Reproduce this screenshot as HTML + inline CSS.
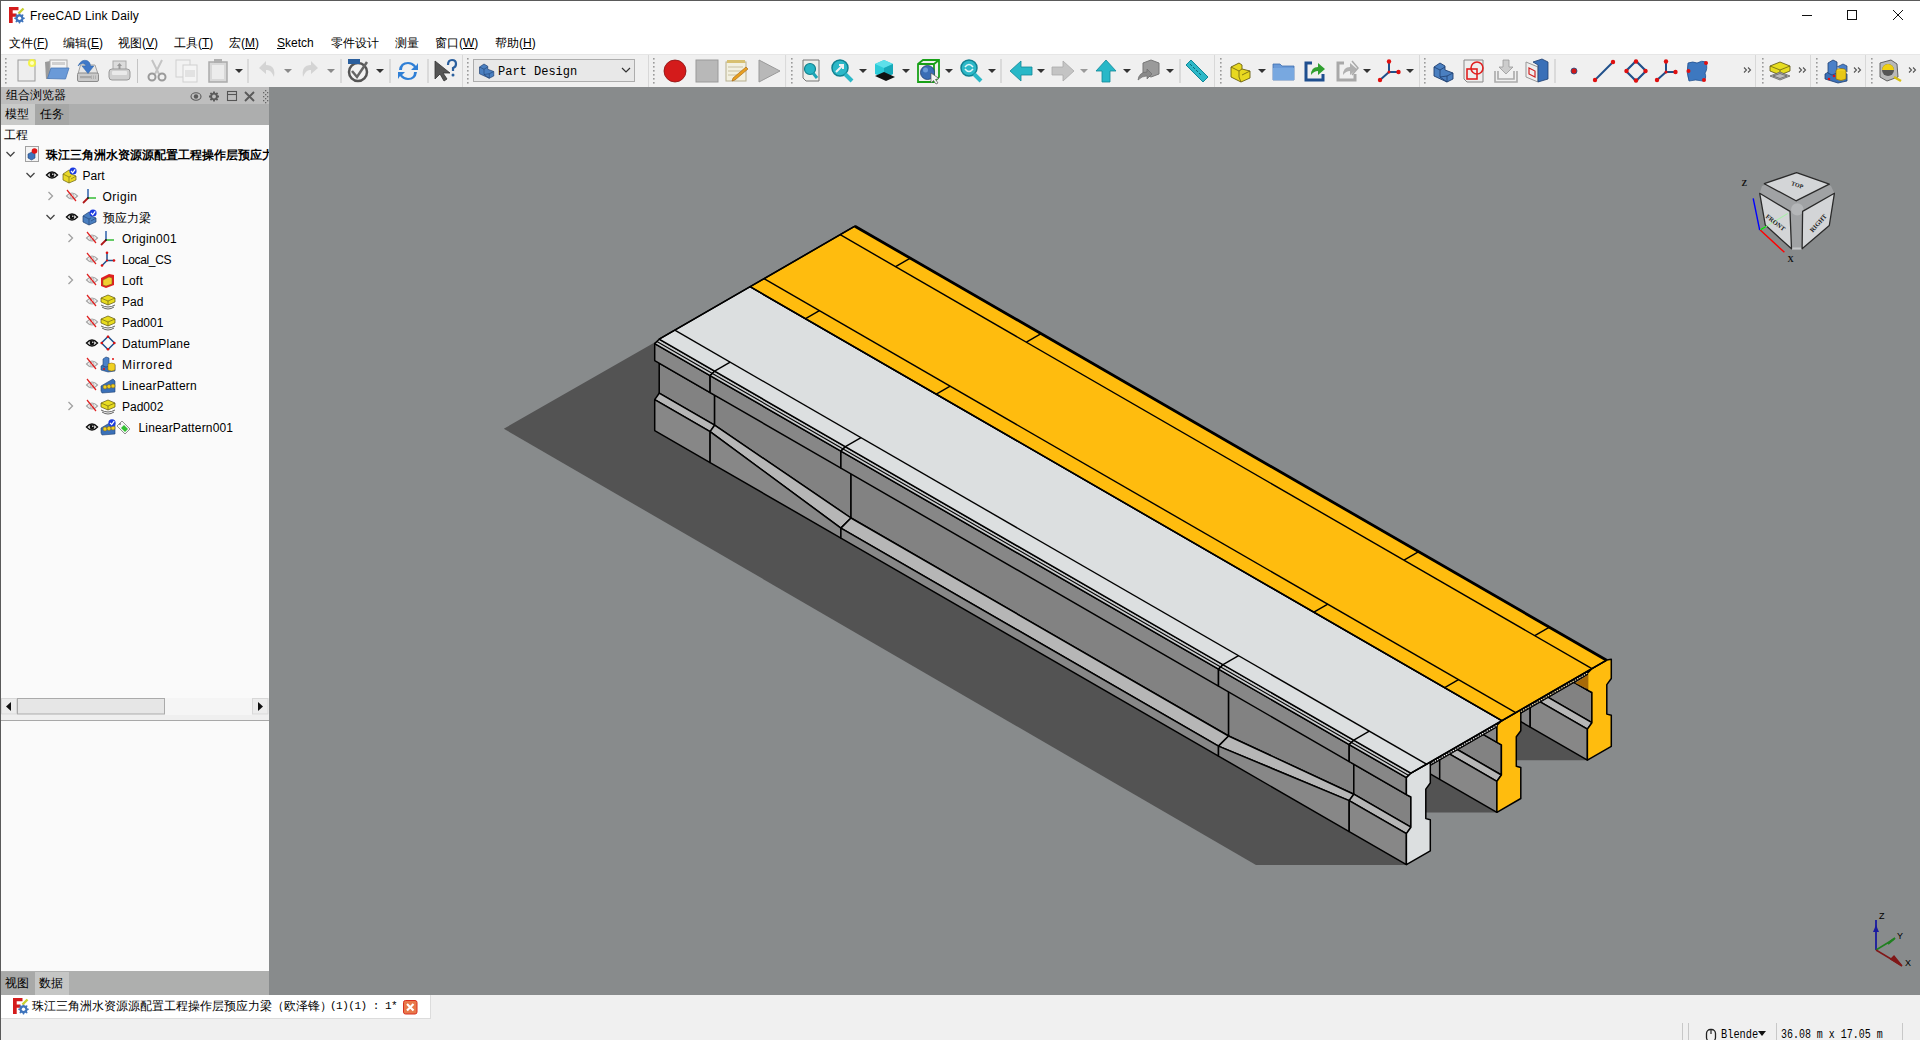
<!DOCTYPE html>
<html><head><meta charset="utf-8"><style>
*{margin:0;padding:0;box-sizing:border-box}
html,body{width:1920px;height:1040px;overflow:hidden;background:#f0f0f0;font-family:"Liberation Sans",sans-serif;font-size:12px;color:#000}
.a{position:absolute}
.m{position:absolute;top:36px;font-size:12px;line-height:15px;white-space:nowrap}
.t{position:absolute;font-size:12px;line-height:16px;white-space:nowrap}
.b{font-weight:bold}
</style></head><body>
<div class="a" style="left:0;top:0;width:1920px;height:54px;background:#fff"></div>
<div class="a" style="left:0;top:0;width:1920px;height:1px;background:#5a5a5a"></div>
<svg class="a" style="left:8px;top:6px" width="18" height="18"><path d="M1 1 L10.5 1 L10.5 4.2 L4.7 4.2 L4.7 7.5 L8.5 7.5 L8.5 10.7 L4.7 10.7 L4.7 17 L1 17Z" fill="#d41c1c"/><path d="M16.77 11.78 L16.77 12.82 L15.23 13.43 L14.94 14.14 L15.60 15.66 L14.86 16.40 L13.34 15.74 L12.63 16.03 L12.02 17.57 L10.98 17.57 L10.37 16.03 L9.66 15.74 L8.14 16.40 L7.40 15.66 L8.06 14.14 L7.77 13.43 L6.23 12.82 L6.23 11.78 L7.77 11.17 L8.06 10.46 L7.40 8.94 L8.14 8.20 L9.66 8.86 L10.37 8.57 L10.98 7.03 L12.02 7.03 L12.63 8.57 L13.34 8.86 L14.86 8.20 L15.60 8.94 L14.94 10.46 L15.23 11.17Z" fill="#3f74bc"/><circle cx="11.5" cy="12.3" r="1.7" fill="#fff"/><path d="M10.5 7.5 L15.5 2.5" stroke="#c8d030" stroke-width="2.4"/></svg>
<div class="a" style="left:30px;top:9px;font-size:12px;line-height:15px;letter-spacing:0.2px">FreeCAD Link Daily</div>
<svg class="a" style="left:1790px;top:0" width="130" height="32"><path d="M12 15.5 H22" stroke="#111" stroke-width="1"/><rect x="57.5" y="10.5" width="9" height="9" fill="none" stroke="#111" stroke-width="1"/><path d="M103 10 L113 20 M113 10 L103 20" stroke="#111" stroke-width="1"/></svg>
<div class="m" style="left:9px">文件(<u>F</u>)</div>
<div class="m" style="left:63px">编辑(<u>E</u>)</div>
<div class="m" style="left:118px">视图(<u>V</u>)</div>
<div class="m" style="left:174px">工具(<u>T</u>)</div>
<div class="m" style="left:229px">宏(<u>M</u>)</div>
<div class="m" style="left:277px"><u>S</u>ketch</div>
<div class="m" style="left:331px">零件设计</div>
<div class="m" style="left:395px">测量</div>
<div class="m" style="left:435px">窗口(<u>W</u>)</div>
<div class="m" style="left:495px">帮助(<u>H</u>)</div>
<div class="a" style="left:0;top:54px;width:1920px;height:33px;background:#f0f0f0;border-top:1px solid #e6e6e6"></div>
<svg style="position:absolute;left:0;top:0" width="1920" height="90"><rect x="5.0" y="58" width="1.6" height="1.6" fill="#9a9a9a"/><rect x="5.0" y="62" width="1.6" height="1.6" fill="#9a9a9a"/><rect x="5.0" y="66" width="1.6" height="1.6" fill="#9a9a9a"/><rect x="5.0" y="70" width="1.6" height="1.6" fill="#9a9a9a"/><rect x="5.0" y="74" width="1.6" height="1.6" fill="#9a9a9a"/><rect x="5.0" y="78" width="1.6" height="1.6" fill="#9a9a9a"/><rect x="5.0" y="82" width="1.6" height="1.6" fill="#9a9a9a"/>
<g transform="translate(17.0,59.0) scale(1.000)"><rect x="1" y="1" width="17" height="21" fill="#eeeeee" stroke="#9a9a9a"/><circle cx="15" cy="4" r="4" fill="#f4f43a" opacity="0.9"/><circle cx="15" cy="4" r="2" fill="#ffffc0"/></g>
<g transform="translate(45.0,59.0) scale(1.000)"><path d="M0 3 L5 2 L5 20 L1 20Z" fill="#9a9a9a"/><rect x="5" y="1" width="17" height="10" fill="#f4f4f4" stroke="#a8a8a8"/><rect x="7" y="3" width="13" height="3" fill="#d0d0d0"/><path d="M2.5 19.5 L6 9 L24 9 L20.5 20 Z" fill="#6a9ad8" stroke="#4a78b8" stroke-width="0.8"/></g>
<g transform="translate(77.0,59.0) scale(1.000)"><path d="M1 15 L3.5 6 L18 6 L21 15 Z" fill="#e6e6e6" stroke="#a0a0a0"/><rect x="0.5" y="14" width="21" height="8.5" rx="1.5" fill="#cacaca" stroke="#8c8c8c"/><rect x="3" y="17" width="11" height="2.2" fill="#a8a8a8"/><path d="M14.5 16.5 V20 M16.5 16.5 V20 M18.5 16.5 V20" stroke="#b0b0b0"/><path d="M1 7 Q4 0 10 1.5 Q13.5 3 13.5 7 L16.8 7 L11 14.5 L5 7 L9 7 Q8.5 4.2 5.5 4.5 Q2.5 5 1 7Z" fill="#3f78c8" stroke="#2f64a8" stroke-width="0.5"/></g>
<g transform="translate(108.0,60.0) scale(1.000)"><rect x="5" y="1" width="13" height="9" fill="#dcdcdc" stroke="#aaa"/><path d="M11.5 3 L14 6 L12.5 6 L12.5 9 L10.5 9 L10.5 6 L9 6Z" fill="#999"/><rect x="1" y="9" width="21" height="11" rx="3" fill="#d0d0d0" stroke="#999"/><rect x="4" y="11" width="15" height="4" rx="1" fill="#eaeaea"/></g>
<line x1="137.5" y1="59" x2="137.5" y2="83" stroke="#c4c4c4" stroke-width="1"/>
<g transform="translate(146.0,59.0) scale(1.000)"><path d="M6 1 L13 15 M16 1 L9 15" stroke="#c4c4c4" stroke-width="2"/><circle cx="6" cy="18" r="3.5" fill="none" stroke="#9a9a9a" stroke-width="2"/><circle cx="16" cy="18" r="3.5" fill="none" stroke="#9a9a9a" stroke-width="2"/></g>
<g transform="translate(175.0,59.0) scale(1.000)"><rect x="1" y="1" width="14" height="17" fill="#f2f2f2" stroke="#d0d0d0"/><rect x="8" y="6" width="14" height="17" fill="#f4f4f4" stroke="#d0d0d0"/><rect x="10" y="11" width="10" height="7" fill="#e2e2e2"/></g>
<g transform="translate(207.0,59.0) scale(1.000)"><rect x="2" y="3" width="18" height="20" fill="#d8d8d8" stroke="#aaa" stroke-width="1.5"/><rect x="5" y="6" width="12" height="14" fill="#ececec"/><rect x="7" y="0" width="8" height="4" fill="#b0b0b0"/></g>
<polygon points="235.0,69.0 243.0,69.0 239.0,73.0" fill="#333"/>
<line x1="248.0" y1="59" x2="248.0" y2="83" stroke="#c4c4c4" stroke-width="1"/>
<g transform="translate(256.0,59.0) scale(1.000)"><path d="M3 9 L10 2 L10 6 Q20 6 18 18 Q15 10 10 11 L10 15 Z" fill="#d4d4d4"/></g>
<polygon points="284.0,69.0 292.0,69.0 288.0,73.0" fill="#8a8a8a"/>
<g transform="translate(299.0,59.0) scale(1.000)"><path d="M19 9 L12 2 L12 6 Q2 6 4 18 Q7 10 12 11 L12 15 Z" fill="#d4d4d4"/></g>
<polygon points="327.0,69.0 335.0,69.0 331.0,73.0" fill="#8a8a8a"/>
<line x1="341.0" y1="59" x2="341.0" y2="83" stroke="#c4c4c4" stroke-width="1"/>
<g transform="translate(346.0,58.0) scale(1.000)"><circle cx="12" cy="14" r="9" fill="#f2f2f2" stroke="#555" stroke-width="2.5"/><path d="M6 13 L11 19 L21 4" fill="none" stroke="#666" stroke-width="2.5"/><rect x="2" y="1" width="12" height="5" fill="#2a5f9e"/></g>
<polygon points="376.0,69.0 384.0,69.0 380.0,73.0" fill="#333"/>
<line x1="390.0" y1="59" x2="390.0" y2="83" stroke="#c4c4c4" stroke-width="1"/>
<g transform="translate(396.0,59.0) scale(1.000)"><path d="M3 11 Q4 3 12 3 Q17 3 20 7 L22 4 L22 11 L15 11 L18 8 Q15 5 12 5 Q6 5 6 11Z" fill="#2f7fd6"/><path d="M21 13 Q20 21 12 21 Q7 21 4 17 L2 20 L2 13 L9 13 L6 16 Q9 19 12 19 Q18 19 18 13Z" fill="#2f7fd6"/></g>
<line x1="428.0" y1="59" x2="428.0" y2="83" stroke="#c4c4c4" stroke-width="1"/>
<g transform="translate(433.0,59.0) scale(1.000)"><path d="M2 2 L2 20 L7 15 L11 22 L14 20 L10 14 L17 14 Z" fill="#555" stroke="#333" stroke-width="0.8"/><path d="M15 6 Q15 1 19 1 Q23 1 23 5 Q23 8 20 9 L20 12" fill="none" stroke="#2a5f9e" stroke-width="2.2"/><circle cx="20" cy="16" r="1.5" fill="#2a5f9e"/></g>
<line x1="462.5" y1="55" x2="462.5" y2="87" stroke="#d8d8d8" stroke-width="1"/>
<rect x="467.0" y="58" width="1.6" height="1.6" fill="#9a9a9a"/><rect x="467.0" y="62" width="1.6" height="1.6" fill="#9a9a9a"/><rect x="467.0" y="66" width="1.6" height="1.6" fill="#9a9a9a"/><rect x="467.0" y="70" width="1.6" height="1.6" fill="#9a9a9a"/><rect x="467.0" y="74" width="1.6" height="1.6" fill="#9a9a9a"/><rect x="467.0" y="78" width="1.6" height="1.6" fill="#9a9a9a"/><rect x="467.0" y="82" width="1.6" height="1.6" fill="#9a9a9a"/>
<rect x="473.5" y="59.5" width="161" height="22" fill="#e8e8e8" stroke="#adadad"/>
<g transform="translate(478.0,61.0) scale(0.750)"><path d="M2 8 L8 4 L13 7 L13 11 L21 14 L21 20 L15 23 L2 17Z" fill="#4a7fc0" stroke="#1f3f70" stroke-width="0.9"/><path d="M2 8 L8 11 L13 8 M8 11 L8 18 L15 23 M15 17 L21 14 M8 18 L15 17 L15 23" stroke="#1f3f70" stroke-width="0.8" fill="none"/></g>
<text x="498" y="75" font-family="Liberation Mono" font-size="12" fill="#000">Part Design</text>
<path d="M622 68 L626 72 L630 68" fill="none" stroke="#333" stroke-width="1.2"/>
<line x1="648.5" y1="55" x2="648.5" y2="87" stroke="#d8d8d8" stroke-width="1"/>
<rect x="653.0" y="58" width="1.6" height="1.6" fill="#9a9a9a"/><rect x="653.0" y="62" width="1.6" height="1.6" fill="#9a9a9a"/><rect x="653.0" y="66" width="1.6" height="1.6" fill="#9a9a9a"/><rect x="653.0" y="70" width="1.6" height="1.6" fill="#9a9a9a"/><rect x="653.0" y="74" width="1.6" height="1.6" fill="#9a9a9a"/><rect x="653.0" y="78" width="1.6" height="1.6" fill="#9a9a9a"/><rect x="653.0" y="82" width="1.6" height="1.6" fill="#9a9a9a"/>
<g transform="translate(663.0,59.0) scale(1.000)"><circle cx="12" cy="12" r="11" fill="#d41b1b" stroke="#8a1010" stroke-width="0.8"/></g>
<g transform="translate(695.0,59.0) scale(1.000)"><rect x="1" y="1" width="22" height="22" fill="#b8b8b8" stroke="#9a9a9a"/></g>
<g transform="translate(725.0,59.0) scale(1.000)"><rect x="1" y="3" width="20" height="19" fill="#f2f0e0" stroke="#b8b090"/><path d="M3 8h15M3 12h15M3 16h12" stroke="#c8c0a0"/><path d="M8 19 L21 8 L23 10 L10 21 L7 22Z" fill="#e8a020" stroke="#a06010" stroke-width="0.6"/><rect x="2" y="1" width="18" height="3" fill="#d8c070"/></g>
<g transform="translate(757.0,59.0) scale(1.000)"><path d="M2 1 L23 12 L2 23 Z" fill="#b8b8b8" stroke="#9a9a9a"/></g>
<line x1="785.6" y1="55" x2="785.6" y2="87" stroke="#d8d8d8" stroke-width="1"/>
<rect x="791.0" y="58" width="1.6" height="1.6" fill="#9a9a9a"/><rect x="791.0" y="62" width="1.6" height="1.6" fill="#9a9a9a"/><rect x="791.0" y="66" width="1.6" height="1.6" fill="#9a9a9a"/><rect x="791.0" y="70" width="1.6" height="1.6" fill="#9a9a9a"/><rect x="791.0" y="74" width="1.6" height="1.6" fill="#9a9a9a"/><rect x="791.0" y="78" width="1.6" height="1.6" fill="#9a9a9a"/><rect x="791.0" y="82" width="1.6" height="1.6" fill="#9a9a9a"/>
<g transform="translate(802.0,59.0) scale(1.000)"><path d="M1 1 L17 1 L17 22 L4 22 L1 19 Z" fill="#eeeeea" stroke="#777"/><circle cx="8" cy="10" r="5.5" fill="#27b5c5" stroke="#13808c" stroke-width="1.2"/><path d="M11 14 L15 19" stroke="#1fa5b5" stroke-width="3"/></g>
<g transform="translate(831.0,59.0) scale(1.000)"><circle cx="9" cy="9" r="8" fill="#2cb8c8" stroke="#108090" stroke-width="1.5"/><path d="M14 15 L21 22" stroke="#2cb8c8" stroke-width="4"/><path d="M5 13 L12 6 M8 6 L12 6 L12 10" stroke="#f0f0f0" stroke-width="2" fill="none"/></g>
<polygon points="859.0,69.0 867.0,69.0 863.0,73.0" fill="#333"/>
<g transform="translate(873.0,59.0) scale(1.000)"><path d="M11 1 L20 5 L20 15 L11 19 L2 15 L2 5 Z" fill="#2ccbd8"/><path d="M2 5 L11 9 L20 5 L11 1Z" fill="#5ee0ea"/><path d="M11 9 L20 5 L20 15 L11 19Z" fill="#18a8b8"/><path d="M2 17 L11 13 L22 18 L13 22Z" fill="#111"/></g>
<polygon points="902.0,69.0 910.0,69.0 906.0,73.0" fill="#333"/>
<g transform="translate(917.0,59.0) scale(1.000)"><path d="M1 5 L6 1 L22 1 L22 18 L17 23 L1 23 Z M1 5 L17 5 L22 1 M17 5 L17 23" fill="none" stroke="#18a018" stroke-width="1.8"/><circle cx="10.5" cy="13.5" r="7" fill="#3a6db5" stroke="#1f3f70" stroke-width="0.8"/><circle cx="8.5" cy="11" r="2.5" fill="#6a9ad8"/><path d="M14 14 L14 24 L16.5 21.5 L19 25 L21 24 L18.5 20.5 L22 19.5Z" fill="#f4f4f4" stroke="#555" stroke-width="0.7"/></g>
<polygon points="945.0,69.0 953.0,69.0 949.0,73.0" fill="#333"/>
<g transform="translate(960.0,59.0) scale(1.000)"><circle cx="9" cy="9" r="8" fill="#2cb8c8" stroke="#108090" stroke-width="1.5"/><path d="M14 15 L21 22" stroke="#2cb8c8" stroke-width="4"/><path d="M5 8 Q9 3 13 8 M13 10 Q9 15 5 10" stroke="#e0f6f8" stroke-width="1.6" fill="none"/></g>
<polygon points="988.0,69.0 996.0,69.0 992.0,73.0" fill="#333"/>
<line x1="1001.0" y1="59" x2="1001.0" y2="83" stroke="#c4c4c4" stroke-width="1"/>
<g transform="translate(1009.0,59.0) scale(1.000)"><path d="M1 12 L12 2 L12 8 L23 8 L23 16 L12 16 L12 22 Z" fill="#28b8c8" stroke="#108898" stroke-width="0.8"/></g>
<polygon points="1037.0,69.0 1045.0,69.0 1041.0,73.0" fill="#333"/>
<g transform="translate(1051.0,59.0) scale(1.000)"><path d="M23 12 L12 2 L12 8 L1 8 L1 16 L12 16 L12 22 Z" fill="#c4c4c4" stroke="#aaa" stroke-width="0.8"/></g>
<polygon points="1080.0,69.0 1088.0,69.0 1084.0,73.0" fill="#9a9a9a"/>
<g transform="translate(1094.0,59.0) scale(1.000)"><path d="M12 1 L22 12 L16 12 L16 23 L8 23 L8 12 L2 12 Z" fill="#28b8c8" stroke="#108898" stroke-width="0.8"/></g>
<polygon points="1123.0,69.0 1131.0,69.0 1127.0,73.0" fill="#333"/>
<g transform="translate(1137.0,59.0) scale(1.000)"><path d="M6 4 L14 1 L22 4 L22 15 L14 18 L6 15Z" fill="#9a9a9a" stroke="#777"/><path d="M1 21 Q2 13 10 13 L10 10 L15 15 L10 20 L10 17 Q5 17 1 21Z" fill="#8a8a8a" stroke="#666" stroke-width="0.6"/></g>
<polygon points="1166.0,69.0 1174.0,69.0 1170.0,73.0" fill="#333"/>
<line x1="1180.0" y1="59" x2="1180.0" y2="83" stroke="#c4c4c4" stroke-width="1"/>
<g transform="translate(1185.0,59.0) scale(1.000)"><path d="M1 6 L6 1 L23 18 L18 23 Z" fill="#2cb8c8" stroke="#108898"/><path d="M5 5 L7 7 M8 8 L10 10 M11 11 L13 13 M14 14 L16 16" stroke="#0a6a78" stroke-width="1"/></g>
<line x1="1214.5" y1="55" x2="1214.5" y2="87" stroke="#d8d8d8" stroke-width="1"/>
<rect x="1220.0" y="58" width="1.6" height="1.6" fill="#9a9a9a"/><rect x="1220.0" y="62" width="1.6" height="1.6" fill="#9a9a9a"/><rect x="1220.0" y="66" width="1.6" height="1.6" fill="#9a9a9a"/><rect x="1220.0" y="70" width="1.6" height="1.6" fill="#9a9a9a"/><rect x="1220.0" y="74" width="1.6" height="1.6" fill="#9a9a9a"/><rect x="1220.0" y="78" width="1.6" height="1.6" fill="#9a9a9a"/><rect x="1220.0" y="82" width="1.6" height="1.6" fill="#9a9a9a"/>
<g transform="translate(1229.0,59.0) scale(1.000)"><path d="M2 8 L10 4 L13 6 L13 10 L21 12 L21 19 L12 23 L2 18Z" fill="#e8d820" stroke="#6a6010" stroke-width="0.9"/><path d="M2 8 L10 12 L13 10 M10 12 L10 18 L12 23 M13 16 L21 12" stroke="#6a6010" stroke-width="0.8" fill="none"/></g>
<polygon points="1258.0,69.0 1266.0,69.0 1262.0,73.0" fill="#333"/>
<g transform="translate(1272.0,59.0) scale(1.000)"><path d="M1 5 L8 5 L10 7 L22 7 L22 21 L1 21 Z" fill="#6a9ad8" stroke="#4070b0" stroke-width="0.8"/><rect x="1" y="9" width="21" height="12" fill="#78a8e0"/></g>
<g transform="translate(1303.0,59.0) scale(1.000)"><path d="M9 4 L3 4 L3 21 L20 21 L20 15" fill="none" stroke="#1f4f8f" stroke-width="3"/><path d="M8 16 Q8 8 15 8 L15 4 L22 10 L15 16 L15 12 Q11 12 8 16Z" fill="#30a030"/></g>
<g transform="translate(1335.0,59.0) scale(1.000)"><path d="M9 4 L3 4 L3 21 L20 21 L20 15" fill="none" stroke="#a8a8a8" stroke-width="3"/><path d="M8 16 Q8 8 15 8 L15 4 L22 10 L15 16 L15 12 Q11 12 8 16Z" fill="#b0b0b0"/><path d="M17 2 L23 9 L17 16" fill="none" stroke="#aaa" stroke-width="1.5"/></g>
<polygon points="1363.0,69.0 1371.0,69.0 1367.0,73.0" fill="#333"/>
<g transform="translate(1377.0,59.0) scale(1.000)"><path d="M12 2 L12 13 L22 13 M12 13 L3 21" stroke="#20508a" stroke-width="2" fill="none"/><circle cx="12" cy="2.5" r="2.2" fill="#e01010"/><circle cx="21.5" cy="13" r="2.2" fill="#e01010"/><circle cx="3" cy="21" r="2.2" fill="#e01010"/><circle cx="12" cy="13" r="1.5" fill="#e01010"/></g>
<polygon points="1406.0,69.0 1414.0,69.0 1410.0,73.0" fill="#333"/>
<line x1="1419.5" y1="55" x2="1419.5" y2="87" stroke="#d8d8d8" stroke-width="1"/>
<rect x="1424.0" y="58" width="1.6" height="1.6" fill="#9a9a9a"/><rect x="1424.0" y="62" width="1.6" height="1.6" fill="#9a9a9a"/><rect x="1424.0" y="66" width="1.6" height="1.6" fill="#9a9a9a"/><rect x="1424.0" y="70" width="1.6" height="1.6" fill="#9a9a9a"/><rect x="1424.0" y="74" width="1.6" height="1.6" fill="#9a9a9a"/><rect x="1424.0" y="78" width="1.6" height="1.6" fill="#9a9a9a"/><rect x="1424.0" y="82" width="1.6" height="1.6" fill="#9a9a9a"/>
<g transform="translate(1432.0,59.0) scale(1.000)"><path d="M2 8 L8 4 L13 7 L13 11 L21 14 L21 20 L15 23 L2 17Z" fill="#4a7fc0" stroke="#1f3f70" stroke-width="0.9"/><path d="M2 8 L8 11 L13 8 M8 11 L8 18 L15 23 M15 17 L21 14 M8 18 L15 17 L15 23" stroke="#1f3f70" stroke-width="0.8" fill="none"/></g>
<g transform="translate(1463.0,59.0) scale(1.000)"><path d="M1 1 L20 1 L20 23 L4 23 L1 20Z" fill="#eeeeee" stroke="#888"/><rect x="4" y="10" width="10" height="10" fill="none" stroke="#e02020" stroke-width="1.6"/><circle cx="14" cy="9" r="6" fill="none" stroke="#e02020" stroke-width="1.6"/></g>
<g transform="translate(1494.0,59.0) scale(1.000)"><path d="M9 1 L15 1 L15 8 L19 8 L12 15 L5 8 L9 8Z" fill="#cccccc" stroke="#999" stroke-width="0.8"/><path d="M1 12 L1 23 L23 23 L23 12 M4 12 L4 20 L20 20 L20 12" fill="none" stroke="#aaa" stroke-width="1.6"/></g>
<g transform="translate(1525.0,59.0) scale(1.000)"><path d="M1 3 L13 8 L13 23 L1 18Z" fill="#eeeeee" stroke="#999"/><path d="M4 9 L10 12 L10 18 L4 15Z" fill="none" stroke="#d02020" stroke-width="1.2"/><path d="M8 3 L17 0 L23 3 L23 20 L13 23 L13 6Z" fill="#3a70b8" stroke="#1f3f70" stroke-width="0.8"/></g>
<line x1="1555.0" y1="59" x2="1555.0" y2="83" stroke="#c4c4c4" stroke-width="1"/>
<g transform="translate(1562.0,59.0) scale(1.000)"><circle cx="12" cy="12" r="3" fill="#d01818" stroke="#20508a" stroke-width="0.8"/></g>
<g transform="translate(1592.0,59.0) scale(1.000)"><path d="M3 21 L21 3" stroke="#20508a" stroke-width="2"/><circle cx="3" cy="21" r="2.2" fill="#e01010"/><circle cx="21" cy="3" r="2.2" fill="#e01010"/></g>
<g transform="translate(1624.0,59.0) scale(1.000)"><path d="M12 2 L22 12 L12 22 L2 12Z" fill="none" stroke="#20508a" stroke-width="2.2"/><circle cx="12" cy="2.5" r="2.2" fill="#e01010"/><circle cx="21.5" cy="12" r="2.2" fill="#e01010"/><circle cx="12" cy="21.5" r="2.2" fill="#e01010"/><circle cx="2.5" cy="12" r="2.2" fill="#e01010"/></g>
<g transform="translate(1654.0,59.0) scale(1.000)"><path d="M12 2 L12 13 L22 13 M12 13 L3 21" stroke="#20508a" stroke-width="2" fill="none"/><circle cx="12" cy="2.5" r="2.2" fill="#e01010"/><circle cx="21.5" cy="13" r="2.2" fill="#e01010"/><circle cx="3" cy="21" r="2.2" fill="#e01010"/><circle cx="12" cy="13" r="1.5" fill="#e01010"/></g>
<g transform="translate(1685.0,59.0) scale(1.000)"><path d="M3 4 Q8 2 12 4 Q17 1 21 3 Q23 10 20 14 Q22 20 18 22 Q10 20 4 22 Q1 14 3 4Z" fill="#3d78c0" stroke="#1f4f8f" stroke-width="0.8"/><circle cx="3.5" cy="12" r="2" fill="#e01010"/><circle cx="21" cy="4" r="2" fill="#e01010"/><circle cx="19" cy="21" r="2" fill="#e01010"/></g>
<path d="M1744.0 67.5 l2.5 2.5 l-2.5 2.5 M1748.0 67.5 l2.5 2.5 l-2.5 2.5" fill="none" stroke="#555" stroke-width="1.1"/>
<path d="M1799.0 67.5 l2.5 2.5 l-2.5 2.5 M1803.0 67.5 l2.5 2.5 l-2.5 2.5" fill="none" stroke="#555" stroke-width="1.1"/>
<path d="M1854.0 67.5 l2.5 2.5 l-2.5 2.5 M1858.0 67.5 l2.5 2.5 l-2.5 2.5" fill="none" stroke="#555" stroke-width="1.1"/>
<path d="M1909.0 67.5 l2.5 2.5 l-2.5 2.5 M1913.0 67.5 l2.5 2.5 l-2.5 2.5" fill="none" stroke="#555" stroke-width="1.1"/>
<line x1="1755.5" y1="55" x2="1755.5" y2="87" stroke="#d8d8d8" stroke-width="1"/>
<rect x="1762.0" y="58" width="1.6" height="1.6" fill="#9a9a9a"/><rect x="1762.0" y="62" width="1.6" height="1.6" fill="#9a9a9a"/><rect x="1762.0" y="66" width="1.6" height="1.6" fill="#9a9a9a"/><rect x="1762.0" y="70" width="1.6" height="1.6" fill="#9a9a9a"/><rect x="1762.0" y="74" width="1.6" height="1.6" fill="#9a9a9a"/><rect x="1762.0" y="78" width="1.6" height="1.6" fill="#9a9a9a"/><rect x="1762.0" y="82" width="1.6" height="1.6" fill="#9a9a9a"/>
<g transform="translate(1768.0,59.0) scale(1.000)"><path d="M2 7 L12 3 L22 7 L22 12 L12 16 L2 12Z" fill="#e6dd20" stroke="#5a5210" stroke-width="0.8"/><path d="M2 7 L12 11 L22 7 M12 11 L12 16" stroke="#5a5210" stroke-width="0.7" fill="none"/><path d="M2 17 L12 13 L22 17 L12 21Z M5 17 L12 14.5 L19 17 L12 19.5Z" fill="#bbb" stroke="#555" stroke-width="0.7"/></g>
<line x1="1810.5" y1="55" x2="1810.5" y2="87" stroke="#d8d8d8" stroke-width="1"/>
<rect x="1816.0" y="58" width="1.6" height="1.6" fill="#9a9a9a"/><rect x="1816.0" y="62" width="1.6" height="1.6" fill="#9a9a9a"/><rect x="1816.0" y="66" width="1.6" height="1.6" fill="#9a9a9a"/><rect x="1816.0" y="70" width="1.6" height="1.6" fill="#9a9a9a"/><rect x="1816.0" y="74" width="1.6" height="1.6" fill="#9a9a9a"/><rect x="1816.0" y="78" width="1.6" height="1.6" fill="#9a9a9a"/><rect x="1816.0" y="82" width="1.6" height="1.6" fill="#9a9a9a"/>
<g transform="translate(1824.0,59.0) scale(1.000)"><path d="M1 15 L8 11 L23 15 L23 22 L14 24 L1 20Z" fill="#3a70b8" stroke="#1f3f70" stroke-width="0.8"/><path d="M4 4 L9 1 L13 3 L13 14 L8 16 L4 14Z" fill="#4a80c8" stroke="#1f3f70" stroke-width="0.8"/><path d="M13 8 L19 5 L23 7 L23 13" fill="#4a80c8" stroke="#1f3f70" stroke-width="0.7"/><ellipse cx="17" cy="12" rx="5" ry="2.5" fill="#f0d020" stroke="#806010" stroke-width="0.6"/><path d="M12 12 L12 20 Q17 23 22 20 L22 12" fill="#e8c818" stroke="#806010" stroke-width="0.6"/><circle cx="5" cy="20" r="1.3" fill="#e01010"/><circle cx="10" cy="17" r="1.3" fill="#e01010"/></g>
<line x1="1865.5" y1="55" x2="1865.5" y2="87" stroke="#d8d8d8" stroke-width="1"/>
<rect x="1871.0" y="58" width="1.6" height="1.6" fill="#9a9a9a"/><rect x="1871.0" y="62" width="1.6" height="1.6" fill="#9a9a9a"/><rect x="1871.0" y="66" width="1.6" height="1.6" fill="#9a9a9a"/><rect x="1871.0" y="70" width="1.6" height="1.6" fill="#9a9a9a"/><rect x="1871.0" y="74" width="1.6" height="1.6" fill="#9a9a9a"/><rect x="1871.0" y="78" width="1.6" height="1.6" fill="#9a9a9a"/><rect x="1871.0" y="82" width="1.6" height="1.6" fill="#9a9a9a"/>
<g transform="translate(1878.0,59.0) scale(1.000)"><path d="M2 4 L13 1 L19 5 L20 18 L9 22 L2 18Z" fill="#b8b8b8" stroke="#555" stroke-width="0.9"/><circle cx="10" cy="11" r="6" fill="#555"/><path d="M4 11 A6 6 0 0 1 16 11Z" fill="#f0d010"/><path d="M16 18 L23 22" stroke="#d8c010" stroke-width="2.5"/></g></svg>
<div class="a" style="left:269px;top:87px;width:1651px;height:908px;background:#888b8c;overflow:hidden"></div>
<svg class="a" style="left:0;top:0" width="1920" height="1040">
<polygon points="503.8,428.7 658.5,340.2 1412.0,775.0 1412.0,860.0 1406.6,865.0 1256.0,865.0" fill="#535353"/>
<polygon points="1412.0,763.4 1496.9,812.6 1412.0,812.6" fill="#535353"/>
<polygon points="1500.0,709.6 1587.4,760.3 1500.0,760.3" fill="#535353"/>
<polygon points="1409.6,580.8 1534.8,659.5 1534.8,689.7 1409.6,631.5" fill="#828282" stroke="#000" stroke-width="1.5" stroke-linejoin="round"/>
<polygon points="1534.8,659.5 1591.9,692.5 1591.9,722.7 1534.8,689.7" fill="#828282" stroke="#000" stroke-width="1.5" stroke-linejoin="round"/>
<polygon points="1409.6,631.5 1534.8,689.7 1530.2,696.1 1399.5,641.6" fill="#b6b6b6" stroke="#000" stroke-width="1.5" stroke-linejoin="round"/>
<polygon points="1534.8,689.7 1591.9,722.7 1587.4,729.1 1530.2,696.1" fill="#b6b6b6" stroke="#000" stroke-width="1.5" stroke-linejoin="round"/>
<polygon points="1399.5,641.6 1530.2,696.1 1530.2,727.1 1399.5,651.6" fill="#878787" stroke="#000" stroke-width="1.5" stroke-linejoin="round"/>
<polygon points="1530.2,696.1 1587.4,729.1 1587.4,760.1 1530.2,727.1" fill="#878787" stroke="#000" stroke-width="1.5" stroke-linejoin="round"/>
<polygon points="1399.5,564.6 1530.2,640.1 1530.2,657.1 1399.5,581.6" fill="#878787" stroke="#000" stroke-width="1.5" stroke-linejoin="round"/>
<polygon points="1530.2,640.1 1587.4,673.1 1587.4,690.1 1530.2,657.1" fill="#878787" stroke="#000" stroke-width="1.5" stroke-linejoin="round"/>
<polygon points="1404.0,560.2 1534.8,635.7 1530.2,640.1 1399.5,564.6" fill="#c8cacb" stroke="#000" stroke-width="1.5" stroke-linejoin="round"/>
<line x1="1401.7" y1="562.4" x2="1532.5" y2="637.9" stroke="#000" stroke-width="1.1"/>
<polygon points="1534.8,635.7 1591.9,668.7 1587.4,673.1 1530.2,640.1" fill="#c8cacb" stroke="#000" stroke-width="1.5" stroke-linejoin="round"/>
<line x1="1532.5" y1="637.9" x2="1589.7" y2="670.9" stroke="#000" stroke-width="1.1"/>
<polygon points="1591.9,668.7 1587.4,673.1 1587.4,690.1 1591.9,692.5 1591.9,722.7 1587.4,729.1 1587.4,760.1 1611.3,746.3 1611.3,715.3 1606.8,714.1 1606.8,684.6 1611.3,678.5 1611.3,659.3 1606.8,660.1" fill="#ffbc0e" stroke="#000" stroke-width="1.5" stroke-linejoin="round"/>
<polygon points="1319.1,633.0 1444.3,711.8 1444.3,742.0 1319.1,683.7" fill="#828282" stroke="#000" stroke-width="1.5" stroke-linejoin="round"/>
<polygon points="1444.3,711.8 1501.4,744.8 1501.4,775.0 1444.3,742.0" fill="#828282" stroke="#000" stroke-width="1.5" stroke-linejoin="round"/>
<polygon points="1319.1,683.7 1444.3,742.0 1439.7,748.3 1309.0,693.8" fill="#b6b6b6" stroke="#000" stroke-width="1.5" stroke-linejoin="round"/>
<polygon points="1444.3,742.0 1501.4,775.0 1496.9,781.3 1439.7,748.3" fill="#b6b6b6" stroke="#000" stroke-width="1.5" stroke-linejoin="round"/>
<polygon points="1309.0,693.8 1439.7,748.3 1439.7,779.3 1309.0,703.8" fill="#878787" stroke="#000" stroke-width="1.5" stroke-linejoin="round"/>
<polygon points="1439.7,748.3 1496.9,781.3 1496.9,812.3 1439.7,779.3" fill="#878787" stroke="#000" stroke-width="1.5" stroke-linejoin="round"/>
<polygon points="1309.0,616.8 1439.7,692.3 1439.7,709.3 1309.0,633.8" fill="#878787" stroke="#000" stroke-width="1.5" stroke-linejoin="round"/>
<polygon points="1439.7,692.3 1496.9,725.3 1496.9,742.3 1439.7,709.3" fill="#878787" stroke="#000" stroke-width="1.5" stroke-linejoin="round"/>
<polygon points="1313.5,612.5 1444.3,688.0 1439.7,692.3 1309.0,616.8" fill="#c8cacb" stroke="#000" stroke-width="1.5" stroke-linejoin="round"/>
<line x1="1311.2" y1="614.6" x2="1442.0" y2="690.1" stroke="#000" stroke-width="1.1"/>
<polygon points="1444.3,688.0 1501.4,721.0 1496.9,725.3 1439.7,692.3" fill="#c8cacb" stroke="#000" stroke-width="1.5" stroke-linejoin="round"/>
<line x1="1442.0" y1="690.1" x2="1499.2" y2="723.1" stroke="#000" stroke-width="1.1"/>
<polygon points="1501.4,721.0 1496.9,725.3 1496.9,742.3 1501.4,744.8 1501.4,775.0 1496.9,781.3 1496.9,812.3 1520.8,798.5 1520.8,767.5 1516.3,766.3 1516.3,736.8 1520.8,730.8 1520.8,709.8" fill="#ffbc0e" stroke="#000" stroke-width="1.5" stroke-linejoin="round"/>
<polygon points="1430.3,762.0 1496.9,723.5 1496.9,727.1 1430.3,765.6" fill="#1a1a1a" stroke="#000" stroke-width="1.0" stroke-linejoin="round"/>
<line x1="1430.3" y1="763.8" x2="1496.9" y2="725.3" stroke="#ffffff" stroke-width="1.2" stroke-dasharray="1.3 1.3"/>
<polygon points="1520.8,709.8 1587.4,671.3 1587.4,674.9 1520.8,713.4" fill="#1a1a1a" stroke="#000" stroke-width="1.0" stroke-linejoin="round"/>
<line x1="1520.8" y1="711.5" x2="1587.4" y2="673.1" stroke="#ffe8a8" stroke-width="1.2" stroke-dasharray="1.3 1.3"/>
<polygon points="1575.3,682.9 1588.0,674.7 1588.0,689.3" fill="#a86a08"/>
<polygon points="659.2,363.0 714.6,395.0 714.6,425.2 659.2,393.2" fill="#828282" stroke="#000" stroke-width="1.5" stroke-linejoin="round"/>
<polygon points="714.6,395.0 851.0,467.2 851.0,518.0 714.6,425.2" fill="#828282" stroke="#000" stroke-width="1.5" stroke-linejoin="round"/>
<polygon points="851.0,467.2 1228.6,685.2 1228.6,736.0 851.0,518.0" fill="#828282" stroke="#000" stroke-width="1.5" stroke-linejoin="round"/>
<polygon points="1228.6,685.2 1353.8,764.0 1353.8,794.2 1228.6,736.0" fill="#828282" stroke="#000" stroke-width="1.5" stroke-linejoin="round"/>
<polygon points="1353.8,764.0 1410.9,797.0 1410.9,827.2 1353.8,794.2" fill="#828282" stroke="#000" stroke-width="1.5" stroke-linejoin="round"/>
<polygon points="659.2,393.2 714.6,425.2 710.1,431.6 654.7,399.6" fill="#b6b6b6" stroke="#000" stroke-width="1.5" stroke-linejoin="round"/>
<polygon points="714.6,425.2 851.0,518.0 840.9,528.1 710.1,431.6" fill="#b6b6b6" stroke="#000" stroke-width="1.5" stroke-linejoin="round"/>
<polygon points="851.0,518.0 1228.6,736.0 1218.5,746.1 840.9,528.1" fill="#b6b6b6" stroke="#000" stroke-width="1.5" stroke-linejoin="round"/>
<polygon points="1228.6,736.0 1353.8,794.2 1349.2,800.6 1218.5,746.1" fill="#b6b6b6" stroke="#000" stroke-width="1.5" stroke-linejoin="round"/>
<polygon points="1353.8,794.2 1410.9,827.2 1406.4,833.6 1349.2,800.6" fill="#b6b6b6" stroke="#000" stroke-width="1.5" stroke-linejoin="round"/>
<polygon points="654.7,399.6 710.1,431.6 710.1,462.6 654.7,430.6" fill="#878787" stroke="#000" stroke-width="1.5" stroke-linejoin="round"/>
<polygon points="710.1,431.6 840.9,528.1 840.9,538.1 710.1,462.6" fill="#878787" stroke="#000" stroke-width="1.5" stroke-linejoin="round"/>
<polygon points="840.9,528.1 1218.5,746.1 1218.5,756.1 840.9,538.1" fill="#878787" stroke="#000" stroke-width="1.5" stroke-linejoin="round"/>
<polygon points="1218.5,746.1 1349.2,800.6 1349.2,831.6 1218.5,756.1" fill="#878787" stroke="#000" stroke-width="1.5" stroke-linejoin="round"/>
<polygon points="1349.2,800.6 1406.4,833.6 1406.4,864.6 1349.2,831.6" fill="#878787" stroke="#000" stroke-width="1.5" stroke-linejoin="round"/>
<polygon points="654.7,343.6 710.1,375.6 710.1,392.6 654.7,360.6" fill="#878787" stroke="#000" stroke-width="1.5" stroke-linejoin="round"/>
<polygon points="710.1,375.6 840.9,451.1 840.9,468.1 710.1,392.6" fill="#878787" stroke="#000" stroke-width="1.5" stroke-linejoin="round"/>
<polygon points="840.9,451.1 1218.5,669.1 1218.5,686.1 840.9,468.1" fill="#878787" stroke="#000" stroke-width="1.5" stroke-linejoin="round"/>
<polygon points="1218.5,669.1 1349.2,744.6 1349.2,761.6 1218.5,686.1" fill="#878787" stroke="#000" stroke-width="1.5" stroke-linejoin="round"/>
<polygon points="1349.2,744.6 1406.4,777.6 1406.4,794.6 1349.2,761.6" fill="#878787" stroke="#000" stroke-width="1.5" stroke-linejoin="round"/>
<polygon points="659.2,339.2 714.6,371.2 710.1,375.6 654.7,343.6" fill="#c8cacb" stroke="#000" stroke-width="1.5" stroke-linejoin="round"/>
<line x1="656.9" y1="341.4" x2="712.4" y2="373.4" stroke="#000" stroke-width="1.1"/>
<polygon points="714.6,371.2 845.4,446.7 840.9,451.1 710.1,375.6" fill="#c8cacb" stroke="#000" stroke-width="1.5" stroke-linejoin="round"/>
<line x1="712.4" y1="373.4" x2="843.1" y2="448.9" stroke="#000" stroke-width="1.1"/>
<polygon points="845.4,446.7 1223.0,664.7 1218.5,669.1 840.9,451.1" fill="#c8cacb" stroke="#000" stroke-width="1.5" stroke-linejoin="round"/>
<line x1="843.1" y1="448.9" x2="1220.7" y2="666.9" stroke="#000" stroke-width="1.1"/>
<polygon points="1223.0,664.7 1353.8,740.2 1349.2,744.6 1218.5,669.1" fill="#c8cacb" stroke="#000" stroke-width="1.5" stroke-linejoin="round"/>
<line x1="1220.7" y1="666.9" x2="1351.5" y2="742.4" stroke="#000" stroke-width="1.1"/>
<polygon points="1353.8,740.2 1410.9,773.2 1406.4,777.6 1349.2,744.6" fill="#c8cacb" stroke="#000" stroke-width="1.5" stroke-linejoin="round"/>
<line x1="1351.5" y1="742.4" x2="1408.7" y2="775.4" stroke="#000" stroke-width="1.1"/>
<polygon points="1410.9,773.2 1406.4,777.6 1406.4,794.6 1410.9,797.0 1410.9,827.2 1406.4,833.6 1406.4,864.6 1430.3,850.8 1430.3,819.8 1425.8,818.6 1425.8,789.1 1430.3,783.0 1430.3,762.0" fill="#dcdfe0" stroke="#000" stroke-width="1.5" stroke-linejoin="round"/>
<polygon points="659.2,339.2 750.1,286.7 1501.8,720.7 1410.9,773.2" fill="#dcdfe0" stroke="#000" stroke-width="1.5" stroke-linejoin="round"/>
<polygon points="750.1,286.7 854.9,226.2 1606.6,660.2 1501.8,720.7" fill="#ffbc0e" stroke="#000" stroke-width="1.5" stroke-linejoin="round"/>
<line x1="674.8" y1="330.2" x2="1426.5" y2="764.2" stroke="#000" stroke-width="1.4"/>
<line x1="750.1" y1="286.7" x2="1501.8" y2="720.7" stroke="#000" stroke-width="1.4"/>
<line x1="764.0" y1="278.7" x2="1515.7" y2="712.7" stroke="#000" stroke-width="1.4"/>
<line x1="840.2" y1="234.7" x2="1591.9" y2="668.7" stroke="#000" stroke-width="1.4"/>
<line x1="714.6" y1="371.2" x2="730.2" y2="362.2" stroke="#000" stroke-width="1.4"/>
<line x1="805.6" y1="318.7" x2="819.4" y2="310.7" stroke="#000" stroke-width="1.4"/>
<line x1="895.6" y1="266.7" x2="910.3" y2="258.2" stroke="#000" stroke-width="1.4"/>
<line x1="845.4" y1="446.7" x2="861.0" y2="437.7" stroke="#000" stroke-width="1.4"/>
<line x1="936.3" y1="394.2" x2="950.2" y2="386.2" stroke="#000" stroke-width="1.4"/>
<line x1="1026.4" y1="342.2" x2="1041.1" y2="333.7" stroke="#000" stroke-width="1.4"/>
<line x1="1223.0" y1="664.7" x2="1238.6" y2="655.7" stroke="#000" stroke-width="1.4"/>
<line x1="1313.9" y1="612.2" x2="1327.8" y2="604.2" stroke="#000" stroke-width="1.4"/>
<line x1="1404.0" y1="560.2" x2="1418.7" y2="551.7" stroke="#000" stroke-width="1.4"/>
<line x1="1353.8" y1="740.2" x2="1369.3" y2="731.2" stroke="#000" stroke-width="1.4"/>
<line x1="1444.7" y1="687.7" x2="1458.5" y2="679.7" stroke="#000" stroke-width="1.4"/>
<line x1="1534.8" y1="635.7" x2="1549.5" y2="627.2" stroke="#000" stroke-width="1.4"/>
<line x1="659.2" y1="339.2" x2="854.9" y2="226.2" stroke="#000" stroke-width="1.4"/>
<line x1="854.9" y1="226.2" x2="1606.6" y2="660.2" stroke="#000" stroke-width="2.8"/>
<line x1="1410.9" y1="773.2" x2="1606.6" y2="660.2" stroke="#000" stroke-width="1.4"/>
<polygon points="1759.7,193.3 1762.0,186.0 1796.6,172.6 1831.0,186.0 1834.4,193.3 1829.3,225.5 1802.1,249.5 1791.5,249.5 1765.3,225.0" fill="#a0a2a4"/>
<circle cx="1797.3" cy="209.4" r="6.2" fill="#b4b6b8"/>
<rect x="1792" y="247.5" width="10" height="2" fill="#c4c6c8"/>
<polygon points="1764.3,183.7 1796.6,172.6 1829.3,184.2 1796.0,200.8" fill="#d3d5d7" stroke="#2a2a2a" stroke-width="1.3" stroke-linejoin="round"/>
<polygon points="1759.7,193.3 1790.0,211.4 1791.5,248.8 1765.3,225.0" fill="#d3d5d7" stroke="#2a2a2a" stroke-width="1.3" stroke-linejoin="round"/>
<polygon points="1802.6,211.4 1834.4,193.3 1829.3,225.5 1802.1,248.8" fill="#d3d5d7" stroke="#2a2a2a" stroke-width="1.3" stroke-linejoin="round"/>
<path d="M1753.2 198.3 L1759.7 230.1" stroke="#0000ff" stroke-width="1.4"/>
<path d="M1760.2 230.1 L1784.4 252.3" stroke="#ff0000" stroke-width="1.4"/>
<path d="M1760.7 229.6 L1788 213.4" stroke="#a8f0a8" stroke-width="1.1"/>
<path d="M1760.7 229.6 L1766 226.5" stroke="#00dd00" stroke-width="1.4"/>
<text x="1741.5" y="186" font-family="Liberation Serif" font-size="8.5" font-weight="bold" fill="#111">Z</text>
<text x="1787.5" y="261.5" font-family="Liberation Serif" font-size="8.5" font-weight="bold" fill="#111">X</text>
<text x="1797" y="187" font-family="Liberation Serif" font-size="6" font-weight="bold" fill="#222" text-anchor="middle" transform="rotate(18 1797 186)">TOP</text>
<text x="1776" y="225" font-family="Liberation Serif" font-size="6.5" font-weight="bold" fill="#222" text-anchor="middle" transform="rotate(38 1776 222)">FRONT</text>
<text x="1817" y="226" font-family="Liberation Serif" font-size="6.5" font-weight="bold" fill="#222" text-anchor="middle" transform="rotate(-48 1817 222)">RIGHT</text>
<path d="M1876 920 L1876 950" stroke="#1a1aa0" stroke-width="1.8"/><path d="M1873 932 L1879 932 L1876 925Z" fill="#1a1aa0"/>
<path d="M1876 950 L1894 939" stroke="#208020" stroke-width="1.5"/><path d="M1888 944 L1895 938 L1891 941Z" fill="#208020" stroke="#208020" stroke-width="2"/>
<path d="M1876 950 L1901 965" stroke="#801818" stroke-width="1.5"/><path d="M1891 959 L1902 966 L1894 956Z" fill="#801818" stroke="#801818" stroke-width="1.5"/>
<text x="1879" y="919" font-family="Liberation Sans" font-size="9" fill="#000">Z</text>
<text x="1897" y="939" font-family="Liberation Sans" font-size="9" fill="#000">Y</text>
<text x="1905" y="966" font-family="Liberation Sans" font-size="9" fill="#000">X</text>
</svg>
<div class="a" style="left:0;top:87px;width:269px;height:17px;background:#bebebe"></div>
<div class="a" style="left:6px;top:88px;font-size:12px;line-height:15px">组合浏览器</div>
<svg class="a" style="left:180px;top:87px" width="89" height="17">
<ellipse cx="16" cy="9.5" rx="5" ry="3.7" fill="none" stroke="#5a5a5a" stroke-width="1.1"/><circle cx="16" cy="9.5" r="2.2" fill="#5a5a5a"/>
<path d="M37.77 8.50 L39.02 8.62 L39.02 10.38 L37.77 10.50 L37.37 11.46 L38.17 12.43 L36.93 13.67 L35.96 12.87 L35.00 13.27 L34.88 14.52 L33.12 14.52 L33.00 13.27 L32.04 12.87 L31.07 13.67 L29.83 12.43 L30.63 11.46 L30.23 10.50 L28.98 10.38 L28.98 8.62 L30.23 8.50 L30.63 7.54 L29.83 6.57 L31.07 5.33 L32.04 6.13 L33.00 5.73 L33.12 4.48 L34.88 4.48 L35.00 5.73 L35.96 6.13 L36.93 5.33 L38.17 6.57 L37.37 7.54Z" fill="#5a5a5a"/><circle cx="34" cy="9.5" r="1.9" fill="#bebebe"/>
<rect x="47.5" y="4.5" width="9" height="9" fill="none" stroke="#555" stroke-width="1.1"/><path d="M47.5 7.5 H56.5" stroke="#555" stroke-width="1.1"/>
<path d="M65 5 L74 14 M74 5 L65 14" stroke="#5a5a5a" stroke-width="1.9"/><rect x="85.0" y="3.0" width="1.3" height="1.3" fill="#666"/><rect x="83.0" y="5.0" width="1.3" height="1.3" fill="#666"/><rect x="87.0" y="5.0" width="1.3" height="1.3" fill="#666"/><rect x="85.0" y="7.0" width="1.3" height="1.3" fill="#666"/><rect x="83.0" y="9.0" width="1.3" height="1.3" fill="#666"/><rect x="87.0" y="9.0" width="1.3" height="1.3" fill="#666"/><rect x="85.0" y="11.0" width="1.3" height="1.3" fill="#666"/><rect x="83.0" y="13.0" width="1.3" height="1.3" fill="#666"/><rect x="87.0" y="13.0" width="1.3" height="1.3" fill="#666"/><rect x="85.0" y="15.0" width="1.3" height="1.3" fill="#666"/><rect x="83.0" y="17.0" width="1.3" height="1.3" fill="#666"/><rect x="87.0" y="17.0" width="1.3" height="1.3" fill="#666"/>
</svg>
<div class="a" style="left:0;top:104px;width:269px;height:21px;background:#adaeae"></div>
<div class="a" style="left:1px;top:104px;width:34px;height:21px;background:#c9cac9"></div>
<div class="a" style="left:35px;top:104px;width:34px;height:21px;background:#a6a7a6"></div>
<div class="a" style="left:5px;top:107px;font-size:12px;line-height:15px">模型</div>
<div class="a" style="left:40px;top:107px;font-size:12px;line-height:15px">任务</div>
<div class="a" style="left:1px;top:125px;width:268px;height:573px;background:#fafafa"></div>
<div class="a" style="left:4px;top:128px;font-size:12px;line-height:15px">工程</div>
<div style="position:absolute;left:0;top:0;width:269px;height:698px;overflow:hidden"><svg style="position:absolute;left:0;top:0" width="269" height="700"><path d="M6.5 152.0 l4 4 l4 -4" fill="none" stroke="#444" stroke-width="1.3"/>
<g transform="translate(25.0,146.0) scale(1.000)"><rect x="0.5" y="0.5" width="13" height="15" fill="#f4f4f4" stroke="#a0a0a0"/><path d="M3 8 L7 6 L10 7.5 L10 12 L6.5 14 L3 12Z" fill="#3f74bc" stroke="#1f3f70" stroke-width="0.6"/><circle cx="9.5" cy="5" r="2.8" fill="#e01515"/></g>
<path d="M26.5 173.0 l4 4 l4 -4" fill="none" stroke="#444" stroke-width="1.3"/>
<g transform="translate(46.0,170.0) scale(1.000)"><path d="M0.5 5 Q6 -1 11.5 5 Q6 11 0.5 5Z" fill="#fff" stroke="#111" stroke-width="1.4"/><circle cx="6" cy="5" r="2.4" fill="#111"/><circle cx="6.8" cy="4.3" r="0.7" fill="#fff"/></g>
<g transform="translate(62.0,167.0) scale(1.000)"><path d="M1 7 L7 3 L9 4.5 L9 7 L14 9 L14 13 L7 16 L1 13Z" fill="#e8d828" stroke="#6a6010" stroke-width="0.7"/><path d="M1 7 L7 10 L9 9 M7 10 L7 16 M9 12 L14 9" stroke="#6a6010" stroke-width="0.6" fill="none"/><circle cx="11" cy="4" r="3.6" fill="#1a3ae0"/><path d="M9 4 L10.7 5.8 L13.2 2.3" stroke="#fff" stroke-width="1.2" fill="none"/></g>
<path d="M48.5 192.0 l4 4 l-4 4" fill="none" stroke="#a0a0a0" stroke-width="1.3"/>
<g transform="translate(66.0,191.0) scale(1.000)"><path d="M0.5 5 Q6 -1 11.5 5 Q6 11 0.5 5Z" fill="none" stroke="#a8a8a8" stroke-width="1.2"/><circle cx="6" cy="5" r="2" fill="none" stroke="#b0b0b0" stroke-width="1"/><path d="M1 -1 L10 10" stroke="#e02020" stroke-width="1.2"/></g>
<g transform="translate(82.0,188.0) scale(1.000)"><path d="M6 1 L6 10" stroke="#3a6ab0" stroke-width="1.6"/><path d="M6 10 L14 10" stroke="#40c040" stroke-width="1.6"/><path d="M6 10 L1 15" stroke="#b01818" stroke-width="1.8"/><circle cx="6" cy="10" r="1" fill="#222"/></g>
<path d="M46.5 215.0 l4 4 l4 -4" fill="none" stroke="#444" stroke-width="1.3"/>
<g transform="translate(66.0,212.0) scale(1.000)"><path d="M0.5 5 Q6 -1 11.5 5 Q6 11 0.5 5Z" fill="#fff" stroke="#111" stroke-width="1.4"/><circle cx="6" cy="5" r="2.4" fill="#111"/><circle cx="6.8" cy="4.3" r="0.7" fill="#fff"/></g>
<g transform="translate(82.0,209.0) scale(1.000)"><path d="M1 7 L7 3 L9 4.5 L9 7 L14 9 L14 13 L7 16 L1 13Z" fill="#4a7fc0" stroke="#1f3f70" stroke-width="0.7"/><path d="M1 7 L7 10 L9 9 M7 10 L7 16 M9 12 L14 9" stroke="#1f3f70" stroke-width="0.6" fill="none"/><circle cx="11" cy="4" r="3.6" fill="#1a3ae0"/><path d="M9 4 L10.7 5.8 L13.2 2.3" stroke="#fff" stroke-width="1.2" fill="none"/></g>
<path d="M68.5 234.0 l4 4 l-4 4" fill="none" stroke="#a0a0a0" stroke-width="1.3"/>
<g transform="translate(86.0,233.0) scale(1.000)"><path d="M0.5 5 Q6 -1 11.5 5 Q6 11 0.5 5Z" fill="none" stroke="#a8a8a8" stroke-width="1.2"/><circle cx="6" cy="5" r="2" fill="none" stroke="#b0b0b0" stroke-width="1"/><path d="M1 -1 L10 10" stroke="#e02020" stroke-width="1.2"/></g>
<g transform="translate(100.0,230.0) scale(1.000)"><path d="M6 1 L6 10" stroke="#3a6ab0" stroke-width="1.6"/><path d="M6 10 L14 10" stroke="#40c040" stroke-width="1.6"/><path d="M6 10 L1 15" stroke="#b01818" stroke-width="1.8"/><circle cx="6" cy="10" r="1" fill="#222"/></g>
<g transform="translate(86.0,254.0) scale(1.000)"><path d="M0.5 5 Q6 -1 11.5 5 Q6 11 0.5 5Z" fill="none" stroke="#a8a8a8" stroke-width="1.2"/><circle cx="6" cy="5" r="2" fill="none" stroke="#b0b0b0" stroke-width="1"/><path d="M1 -1 L10 10" stroke="#e02020" stroke-width="1.2"/></g>
<g transform="translate(100.0,251.0) scale(1.000)"><path d="M7 1.5 L7 9.5 L14 9.5 M7 9.5 L2 14.5" stroke="#20508a" stroke-width="1.5" fill="none"/><circle cx="7" cy="1.8" r="1.3" fill="#e01010"/><circle cx="14" cy="9.5" r="1.3" fill="#e01010"/><circle cx="2" cy="14.5" r="1.3" fill="#e01010"/><circle cx="7" cy="9.5" r="1.1" fill="#e01010"/></g>
<path d="M68.5 276.0 l4 4 l-4 4" fill="none" stroke="#a0a0a0" stroke-width="1.3"/>
<g transform="translate(86.0,275.0) scale(1.000)"><path d="M0.5 5 Q6 -1 11.5 5 Q6 11 0.5 5Z" fill="none" stroke="#a8a8a8" stroke-width="1.2"/><circle cx="6" cy="5" r="2" fill="none" stroke="#b0b0b0" stroke-width="1"/><path d="M1 -1 L10 10" stroke="#e02020" stroke-width="1.2"/></g>
<g transform="translate(100.0,272.0) scale(1.000)"><path d="M1 6 L9 2 L14 3 L14 13 L6 16 L1 14Z" fill="#e02020"/><path d="M3 8 L9 5 L12 6 L12 12 L6 14 L3 13Z" fill="#f0d030" stroke="#806010" stroke-width="0.5"/></g>
<g transform="translate(86.0,296.0) scale(1.000)"><path d="M0.5 5 Q6 -1 11.5 5 Q6 11 0.5 5Z" fill="none" stroke="#a8a8a8" stroke-width="1.2"/><circle cx="6" cy="5" r="2" fill="none" stroke="#b0b0b0" stroke-width="1"/><path d="M1 -1 L10 10" stroke="#e02020" stroke-width="1.2"/></g>
<g transform="translate(100.0,293.0) scale(1.000)"><path d="M1 5 L8 2 L15 5 L15 9 L8 12 L1 9Z" fill="#e8dc20" stroke="#5a5210" stroke-width="0.7"/><path d="M1 5 L8 8 L15 5 M8 8 L8 12" stroke="#5a5210" stroke-width="0.6" fill="none"/><path d="M1 12 Q8 16 15 12 M2 14 Q8 18 14 14" stroke="#666" stroke-width="1" fill="none"/></g>
<g transform="translate(86.0,317.0) scale(1.000)"><path d="M0.5 5 Q6 -1 11.5 5 Q6 11 0.5 5Z" fill="none" stroke="#a8a8a8" stroke-width="1.2"/><circle cx="6" cy="5" r="2" fill="none" stroke="#b0b0b0" stroke-width="1"/><path d="M1 -1 L10 10" stroke="#e02020" stroke-width="1.2"/></g>
<g transform="translate(100.0,314.0) scale(1.000)"><path d="M1 5 L8 2 L15 5 L15 9 L8 12 L1 9Z" fill="#e8dc20" stroke="#5a5210" stroke-width="0.7"/><path d="M1 5 L8 8 L15 5 M8 8 L8 12" stroke="#5a5210" stroke-width="0.6" fill="none"/><path d="M1 12 Q8 16 15 12 M2 14 Q8 18 14 14" stroke="#666" stroke-width="1" fill="none"/></g>
<g transform="translate(86.0,338.0) scale(1.000)"><path d="M0.5 5 Q6 -1 11.5 5 Q6 11 0.5 5Z" fill="#fff" stroke="#111" stroke-width="1.4"/><circle cx="6" cy="5" r="2.4" fill="#111"/><circle cx="6.8" cy="4.3" r="0.7" fill="#fff"/></g>
<g transform="translate(100.0,335.0) scale(1.000)"><path d="M8 1.5 L14.5 8 L8 14.5 L1.5 8Z" fill="none" stroke="#20508a" stroke-width="1.5"/><circle cx="8" cy="1.8" r="1.3" fill="#e01010"/><circle cx="14.3" cy="8" r="1.3" fill="#e01010"/><circle cx="8" cy="14.3" r="1.3" fill="#e01010"/><circle cx="1.8" cy="8" r="1.3" fill="#e01010"/></g>
<g transform="translate(86.0,359.0) scale(1.000)"><path d="M0.5 5 Q6 -1 11.5 5 Q6 11 0.5 5Z" fill="none" stroke="#a8a8a8" stroke-width="1.2"/><circle cx="6" cy="5" r="2" fill="none" stroke="#b0b0b0" stroke-width="1"/><path d="M1 -1 L10 10" stroke="#e02020" stroke-width="1.2"/></g>
<g transform="translate(100.0,356.0) scale(1.000)"><path d="M1 10 L6 7 L15 9 L15 15 L8 16 L1 14Z" fill="#3a70b8" stroke="#1f3f70" stroke-width="0.6"/><path d="M3 3 L6 1 L9 2 L9 10 L6 11 L3 10Z" fill="#4a80c8" stroke="#1f3f70" stroke-width="0.6"/><path d="M8 8 L8 14 Q11.5 16 15 14 L15 8 Q11.5 6 8 8Z" fill="#f0d020" stroke="#806010" stroke-width="0.5"/><circle cx="4" cy="13" r="1" fill="#e01010"/><circle cx="13" cy="3" r="1" fill="#e01010"/></g>
<g transform="translate(86.0,380.0) scale(1.000)"><path d="M0.5 5 Q6 -1 11.5 5 Q6 11 0.5 5Z" fill="none" stroke="#a8a8a8" stroke-width="1.2"/><circle cx="6" cy="5" r="2" fill="none" stroke="#b0b0b0" stroke-width="1"/><path d="M1 -1 L10 10" stroke="#e02020" stroke-width="1.2"/></g>
<g transform="translate(100.0,377.0) scale(1.000)"><path d="M1 9 L13 2 L15 4 L15 15 L2 16 L1 14Z" fill="#3a70b8" stroke="#1f3f70" stroke-width="0.6"/><circle cx="5" cy="10" r="2" fill="#f0d020" stroke="#806010" stroke-width="0.5"/><circle cx="9" cy="9.5" r="2" fill="#f0d020" stroke="#806010" stroke-width="0.5"/><circle cx="13" cy="9" r="2" fill="#f0d020" stroke="#806010" stroke-width="0.5"/></g>
<path d="M68.5 402.0 l4 4 l-4 4" fill="none" stroke="#a0a0a0" stroke-width="1.3"/>
<g transform="translate(86.0,401.0) scale(1.000)"><path d="M0.5 5 Q6 -1 11.5 5 Q6 11 0.5 5Z" fill="none" stroke="#a8a8a8" stroke-width="1.2"/><circle cx="6" cy="5" r="2" fill="none" stroke="#b0b0b0" stroke-width="1"/><path d="M1 -1 L10 10" stroke="#e02020" stroke-width="1.2"/></g>
<g transform="translate(100.0,398.0) scale(1.000)"><path d="M1 5 L8 2 L15 5 L15 9 L8 12 L1 9Z" fill="#e8dc20" stroke="#5a5210" stroke-width="0.7"/><path d="M1 5 L8 8 L15 5 M8 8 L8 12" stroke="#5a5210" stroke-width="0.6" fill="none"/><path d="M1 12 Q8 16 15 12 M2 14 Q8 18 14 14" stroke="#666" stroke-width="1" fill="none"/></g>
<g transform="translate(86.0,422.0) scale(1.000)"><path d="M0.5 5 Q6 -1 11.5 5 Q6 11 0.5 5Z" fill="#fff" stroke="#111" stroke-width="1.4"/><circle cx="6" cy="5" r="2.4" fill="#111"/><circle cx="6.8" cy="4.3" r="0.7" fill="#fff"/></g>
<g transform="translate(100.0,419.0) scale(1.000)"><path d="M1 9 L13 2 L15 4 L15 15 L2 16 L1 14Z" fill="#3a70b8" stroke="#1f3f70" stroke-width="0.6"/><circle cx="5" cy="10" r="2" fill="#f0d020" stroke="#806010" stroke-width="0.5"/><circle cx="9" cy="9.5" r="2" fill="#f0d020" stroke="#806010" stroke-width="0.5"/><circle cx="13" cy="9" r="2" fill="#f0d020" stroke="#806010" stroke-width="0.5"/><circle cx="12" cy="3.8" r="3.6" fill="#1a3ae0"/><path d="M10 3.8 L11.7 5.6 L14.2 2.1" stroke="#fff" stroke-width="1.2" fill="none"/></g>
<g transform="translate(116.0,420.0) scale(1.000)"><path d="M1 6 L6 1 L14 9 L9 14Z" fill="#f4f4f4" stroke="#777" stroke-width="0.8"/><path d="M5 8 L8 5 L12 9 L9 12Z" fill="#30c030"/><circle cx="4" cy="4" r="1" fill="#777"/></g></svg><div class="t b" style="left:46px;top:147px">珠江三角洲水资源源配置工程操作层预应力梁</div>
<div class="t" style="left:82.5px;top:168px;letter-spacing:0.00px">Part</div>
<div class="t" style="left:102.5px;top:189px;letter-spacing:0.50px">Origin</div>
<div class="t" style="left:102.5px;top:210px;letter-spacing:0.00px">预应力梁</div>
<div class="t" style="left:122.0px;top:231px;letter-spacing:0.33px">Origin001</div>
<div class="t" style="left:122.0px;top:252px;letter-spacing:-0.37px">Local_CS</div>
<div class="t" style="left:122.0px;top:273px;letter-spacing:0.25px">Loft</div>
<div class="t" style="left:122.0px;top:294px;letter-spacing:0.00px">Pad</div>
<div class="t" style="left:122.0px;top:315px;letter-spacing:0.00px">Pad001</div>
<div class="t" style="left:122.0px;top:336px;letter-spacing:0.20px">DatumPlane</div>
<div class="t" style="left:122.0px;top:357px;letter-spacing:0.80px">Mirrored</div>
<div class="t" style="left:122.0px;top:378px;letter-spacing:0.22px">LinearPattern</div>
<div class="t" style="left:122.0px;top:399px;letter-spacing:0.00px">Pad002</div>
<div class="t" style="left:138.5px;top:420px;letter-spacing:0.16px">LinearPattern001</div></div>
<div class="a" style="left:1px;top:698px;width:268px;height:17px;background:#f5f5f5"></div>
<svg class="a" style="left:0;top:698px" width="269" height="17">
<rect x="1.5" y="0.5" width="15" height="15.5" fill="#ececec" stroke="#d8d8d8"/><path d="M11 4 L6 8.5 L11 13Z" fill="#111"/>
<rect x="17.5" y="0.5" width="147" height="15.5" fill="#e6e6e6" stroke="#aaa"/>
<rect x="252.5" y="0.5" width="15.5" height="15.5" fill="#ececec" stroke="#d8d8d8"/><path d="M258 4 L263 8.5 L258 13Z" fill="#111"/>
</svg>
<div class="a" style="left:1px;top:715px;width:268px;height:5px;background:#efefef"></div>
<div class="a" style="left:1px;top:720px;width:268px;height:1px;background:#a8a8a8"></div>
<div class="a" style="left:1px;top:721px;width:268px;height:250px;background:#fafafa"></div>
<div class="a" style="left:0;top:971px;width:269px;height:24px;background:#aeafae"></div>
<div class="a" style="left:1px;top:972px;width:34px;height:23px;background:#a8a9a8"></div>
<div class="a" style="left:35px;top:972px;width:34px;height:23px;background:#c5c6c5"></div>
<div class="a" style="left:5px;top:976px;font-size:12px;line-height:15px">视图</div>
<div class="a" style="left:39px;top:976px;font-size:12px;line-height:15px">数据</div>
<div class="a" style="left:0;top:995px;width:1920px;height:45px;background:#f0f0f0"></div>
<div class="a" style="left:1px;top:995px;width:430px;height:24px;background:#fff;border-bottom:1px solid #dcdcdc;border-right:1px solid #dcdcdc"></div>
<svg class="a" style="left:12px;top:997px" width="18" height="18"><path d="M1 1 L10.5 1 L10.5 4.2 L4.7 4.2 L4.7 7.5 L8.5 7.5 L8.5 10.7 L4.7 10.7 L4.7 17 L1 17Z" fill="#d41c1c"/><path d="M16.77 11.78 L16.77 12.82 L15.23 13.43 L14.94 14.14 L15.60 15.66 L14.86 16.40 L13.34 15.74 L12.63 16.03 L12.02 17.57 L10.98 17.57 L10.37 16.03 L9.66 15.74 L8.14 16.40 L7.40 15.66 L8.06 14.14 L7.77 13.43 L6.23 12.82 L6.23 11.78 L7.77 11.17 L8.06 10.46 L7.40 8.94 L8.14 8.20 L9.66 8.86 L10.37 8.57 L10.98 7.03 L12.02 7.03 L12.63 8.57 L13.34 8.86 L14.86 8.20 L15.60 8.94 L14.94 10.46 L15.23 11.17Z" fill="#3f74bc"/><circle cx="11.5" cy="12.3" r="1.7" fill="#fff"/><path d="M10.5 7.5 L15.5 2.5" stroke="#c8d030" stroke-width="2.4"/></svg>
<div class="a" style="left:32px;top:999px;font-size:12px;line-height:15px;white-space:nowrap">珠江三角洲水资源源配置工程操作层预应力梁（欧泽锋）</div><div class="a" style="left:330px;top:999px;font-family:'Liberation Mono';font-size:11px;line-height:15px;white-space:pre;letter-spacing:-0.5px">(1)(1) : 1*</div>
<svg class="a" style="left:403px;top:1000px" width="15" height="15"><rect x="0.5" y="0.5" width="13.5" height="13.5" rx="2" fill="#e8784a" stroke="#d83020"/><path d="M4 4 L10.5 10.5 M10.5 4 L4 10.5" stroke="#fff" stroke-width="2.2"/></svg>
<svg class="a" style="left:1680px;top:1019px" width="240" height="21"><path d="M2.5 4 V21 M8.5 4 V21 M96.5 4 V21 M222.5 4 V21" stroke="#c8c8c8"/><rect x="26.5" y="10.5" width="9" height="12" rx="4" fill="none" stroke="#222" stroke-width="1.3"/><path d="M31 10.5 V15" stroke="#222" stroke-width="1.2"/><path d="M78 12 L86 12 L82 17Z" fill="#111"/></svg>
<div class="a" style="left:1721px;top:1028px;width:44px;overflow:hidden;font-family:'Liberation Mono';font-size:12px;line-height:14px;transform:scaleX(0.86);transform-origin:0 0;white-space:pre">Blender</div>
<div class="a" style="left:1781px;top:1028px;font-family:'Liberation Mono';font-size:12px;line-height:14px;white-space:pre;transform:scaleX(0.83);transform-origin:0 0">36.08 m x 17.05 m</div>
<div class="a" style="left:0;top:0;width:1px;height:1040px;background:#5a5a5a"></div>
</body></html>
